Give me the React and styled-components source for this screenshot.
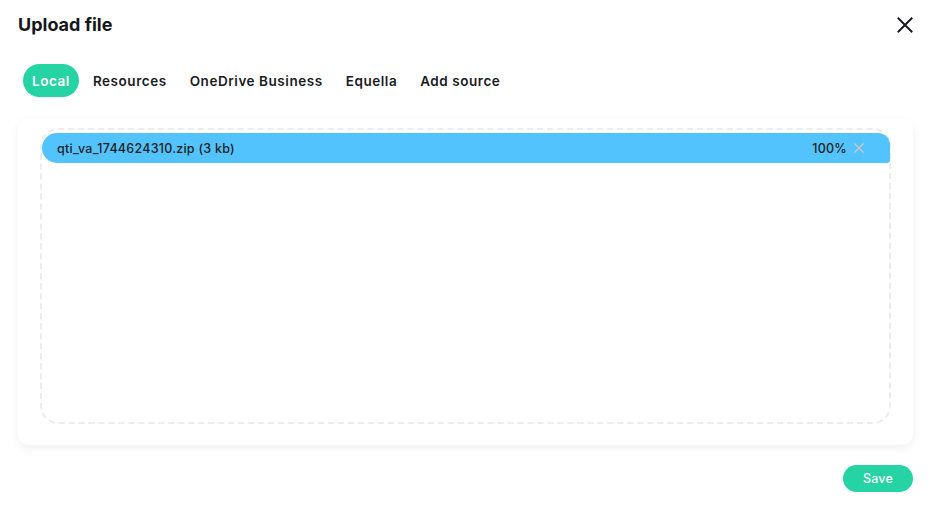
import React from "react";
import styled, { createGlobalStyle } from "styled-components";

const GlobalStyle = createGlobalStyle`
  html, body {
    margin: 0;
    padding: 0;
    background: #fff;
  }
  body {
    font-family: Inter, "Open Sans", sans-serif;
    color: #1b1b1f;
  }
`;

const tabs = ["Local", "Resources", "OneDrive Business", "Equella", "Add source"];

function CloseIcon({ size = 16, stroke = "#1b1b1f", width = 2 }) {
  return (
    <svg width={size} height={size} viewBox="0 0 16 16" fill="none">
      <path d="M1.5 1.5L14.5 14.5M14.5 1.5L1.5 14.5" stroke={stroke} strokeWidth={width} strokeLinecap="square" />
    </svg>
  );
}

export default function App() {
  return (
    <>
      <GlobalStyle />
      <Dialog>
        <Header>
          <Title>Upload file</Title>
          <CloseButton aria-label="close">
            <CloseIcon />
          </CloseButton>
        </Header>
        <Tabs>
          {tabs.map((t, i) => (
            <Tab key={t} $active={i === 0}>
              {t}
            </Tab>
          ))}
        </Tabs>
        <Card>
          <DropZone>
            <FileBar>
              <FileName>qti_va_1744624310.zip (3 kb)</FileName>
              <Progress>100%</Progress>
              <RemoveButton aria-label="remove">
                <CloseIcon size={10} stroke="#c4c9ce" width={2.4} />
              </RemoveButton>
            </FileBar>
          </DropZone>
        </Card>
        <Footer>
          <SaveButton>Save</SaveButton>
        </Footer>
      </Dialog>
    </>
  );
}

const Dialog = styled.div`
  width: 931px;
  padding: 0 18px;
  box-sizing: border-box;
`;

const Header = styled.div`
  display: flex;
  justify-content: space-between;
  align-items: center;
  height: 49px;
`;

const Title = styled.h1`
  margin: 0;
  font-size: 18px;
  font-weight: 700;
  color: #16161a;
`;

const CloseButton = styled.button`
  border: none;
  background: none;
  padding: 0;
  display: flex;
  cursor: pointer;
`;

const Tabs = styled.div`
  display: flex;
  align-items: center;
  margin-top: 15px;
  padding-left: 5px;
`;

const Tab = styled.button`
  border: none;
  cursor: pointer;
  font-family: inherit;
  font-size: 13.5px;
  font-weight: 600;
  height: 33px;
  padding: 0 ${(p) => (p.$active ? "9px" : "10px")};
  margin-right: ${(p) => (p.$active ? "4px" : "3px")};
  border-radius: 17px;
  background: ${(p) => (p.$active ? "#25d3a4" : "transparent")};
  color: ${(p) => (p.$active ? "#fff" : "#1b1b1f")};
  letter-spacing: 0.55px;
`;

const Card = styled.div`
  margin-top: 21px;
  background: #fff;
  border-radius: 10px;
  box-shadow: 0 4px 10px rgba(0, 0, 0, 0.06);
  padding: 10px 22px 21px;
`;

const DropZone = styled.div`
  height: 296px;
  border: 2px dashed #eaecf0;
  border-radius: 18px;
  box-sizing: border-box;
  padding: 3px 0 0;
`;

const FileBar = styled.div`
  display: flex;
  align-items: center;
  height: 30px;
  margin-right: -1px;
  padding: 0 26px 0 15px;
  background: #53c3fd;
  border-radius: 15px 12px 3px 15px;
  font-size: 12.5px;
  font-weight: 500;
  letter-spacing: 0.25px;
  color: #1a1d22;
`;

const FileName = styled.span`
  flex: 1;
`;

const Progress = styled.span`
  margin-right: 7px;
`;

const RemoveButton = styled.button`
  border: none;
  background: none;
  padding: 0;
  display: flex;
`;

const Footer = styled.div`
  display: flex;
  justify-content: flex-end;
  margin-top: 20px;
`;

const SaveButton = styled.button`
  border: none;
  cursor: pointer;
  font-family: inherit;
  font-size: 12.5px;
  font-weight: 500;
  letter-spacing: 0.2px;
  height: 27px;
  width: 70px;
  border-radius: 14px;
  background: #25d3a4;
  color: #fff;
`;
